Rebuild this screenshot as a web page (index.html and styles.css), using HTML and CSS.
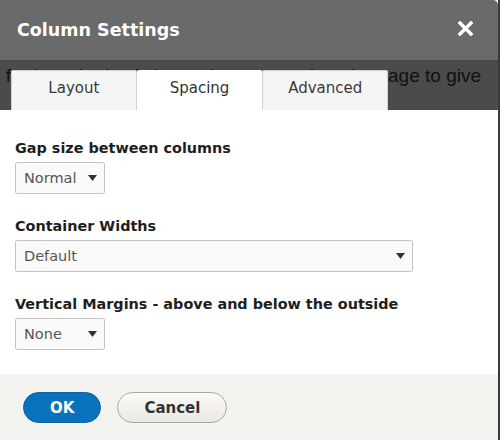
FILE: index.html
```html
<!DOCTYPE html>
<html lang="en">
<head>
<meta charset="utf-8">
<title>Column Settings</title>
<link rel="stylesheet" href="styles.css">
</head>
<body>
<div class="dialog">
  <div class="titlebar">
    <span class="title">Column Settings</span>
    <button class="close" aria-label="Close">
      <svg width="15" height="15" viewBox="0 0 15 15"><path d="M2 2 L13 13 M13 2 L2 13" stroke="#fff" stroke-width="3.4" stroke-linecap="square"/></svg>
    </button>
  </div>
  <div class="strip">
    <div class="behind"><span>some options for how the basic layout is presented on the page to give</span></div>
    <div class="tabs">
      <div class="tab">Layout</div>
      <div class="tab active">Spacing</div>
      <div class="tab">Advanced</div>
    </div>
  </div>
  <div class="content">
    <div class="field">
      <div class="label">Gap size between columns</div>
      <div class="select small"><span>Normal</span><svg width="9" height="6" viewBox="0 0 9 6"><polygon points="0,0 9,0 4.5,6" fill="#333"/></svg></div>
    </div>
    <div class="field">
      <div class="label">Container Widths</div>
      <div class="select wide"><span>Default</span><svg width="9" height="6" viewBox="0 0 9 6"><polygon points="0,0 9,0 4.5,6" fill="#333"/></svg></div>
    </div>
    <div class="field">
      <div class="label">Vertical Margins - above and below the outside</div>
      <div class="select small"><span>None</span><svg width="9" height="6" viewBox="0 0 9 6"><polygon points="0,0 9,0 4.5,6" fill="#333"/></svg></div>
    </div>
  </div>
  <div class="footer">
    <button class="btn primary">OK</button>
    <button class="btn">Cancel</button>
  </div>
</div>
</body>
</html>
```

FILE: styles.css
```css
* { box-sizing: border-box; }
html, body { margin: 0; padding: 0; }
body {
  background: #3a3a3a;
  font-family: "DejaVu Sans", "Noto Sans", sans-serif;
  width: 500px;
  height: 440px;
  overflow: hidden;
}
.dialog {
  width: 498px;
  height: 440px;
  display: flex;
  flex-direction: column;
  background: #fff;
}
.titlebar {
  height: 60px;
  background: #6a6a6a;
  border-top-right-radius: 5px;
  display: flex;
  align-items: center;
  justify-content: space-between;
  padding: 0 25px 0 17px;
}
.title {
  color: #fff;
  font-weight: bold;
  font-size: 17.5px;
  line-height: 60px;
}
.close {
  background: none;
  border: 0;
  padding: 0;
  width: 15px;
  height: 15px;
  margin-bottom: 4px;
  display: flex;
}
.strip {
  height: 50px;
  background: #4b4b4b;
  display: grid;
}
.behind {
  grid-area: 1 / 1;
  display: flex;
  justify-content: flex-end;
  overflow: hidden;
  white-space: nowrap;
  padding: 5px 17px 0 0;
  font-family: "Liberation Sans", Arial, sans-serif;
  font-size: 19px;
  line-height: 21px;
  color: #111;
}
.tabs {
  grid-area: 1 / 1;
  align-self: end;
  display: flex;
  padding-left: 11px;
}
.tab {
  width: 125.7px;
  height: 40px;
  padding-top: 7px;
  line-height: 20px;
  text-align: center;
  font-size: 15px;
  color: #3a3a3a;
  background: #f5f5f5;
  border: 1px solid #d0d0d0;
  border-bottom: 0;
  border-radius: 2px 2px 0 0;
}
.tab.active {
  background: #fff;
  border-color: #fff;
  color: #333;
}
.content {
  flex: 1;
  padding: 29px 15px 0 15px;
  display: flex;
  flex-direction: column;
  gap: 23px;
}
.label {
  font-weight: bold;
  font-size: 14.4px;
  line-height: 18px;
  color: #1e1e1e;
  margin-bottom: 5px;
}
.select {
  height: 32px;
  border: 1px solid #c4c4c4;
  border-radius: 2px;
  background: #fafafa;
  display: flex;
  align-items: center;
  justify-content: space-between;
  padding: 0 7px 0 8px;
  font-size: 14.5px;
  line-height: 17px;
  color: #555;
}
.select.small { width: 90px; }
.select.wide { width: 398px; }
.select svg { display: block; }
.footer {
  height: 66px;
  background: #f3f3ef;
  display: flex;
  align-items: flex-start;
  gap: 16px;
  padding: 18px 0 0 23px;
}
.btn {
  height: 31px;
  padding: 0 26px;
  border-radius: 20px;
  font-family: "DejaVu Sans", sans-serif;
  font-weight: bold;
  font-size: 15px;
  color: #333;
  background: linear-gradient(#fbfbf8, #e9e8e1);
  border: 1px solid #a9a9a4;
}
.btn.primary {
  background: #0873bc;
  border-color: #1460a0;
  color: #fff;
}
```
